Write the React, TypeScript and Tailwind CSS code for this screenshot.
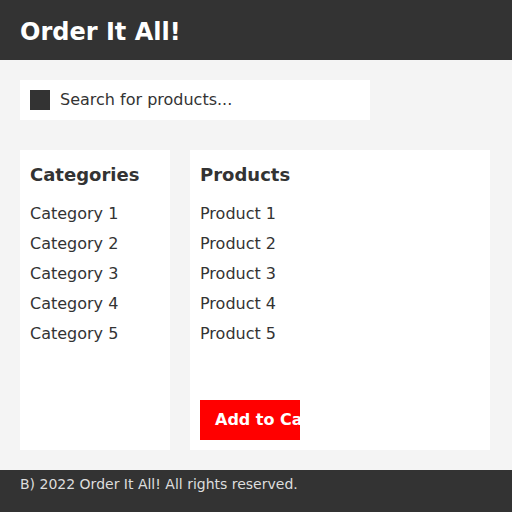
export default function App() {
  const categories = ['Category 1', 'Category 2', 'Category 3', 'Category 4', 'Category 5']
  const products = ['Product 1', 'Product 2', 'Product 3', 'Product 4', 'Product 5']

  return (
    <div className="flex h-[512px] w-[512px] flex-col overflow-hidden bg-[#f4f4f4] font-['DejaVu_Sans',sans-serif] text-[#333]">
      {/* Header */}
      <header className="flex h-[60px] shrink-0 items-center bg-[#333] px-[20px] pt-[4px]">
        <h1 className="text-[24px] font-bold text-white">Order It All!</h1>
      </header>

      <main className="flex flex-1 flex-col gap-[30px] p-[20px]">
        {/* Search */}
        <div className="flex h-[40px] w-[350px] items-center gap-[10px] bg-white px-[10px]">
          <span className="h-[20px] w-[20px] bg-[#333]" />
          <span className="text-[16px]">Search for products...</span>
        </div>

        <div className="flex flex-1 gap-[20px]">
          {/* Categories */}
          <section className="flex w-[150px] flex-col bg-white p-[10px]">
            <h2 className="mb-[10px] text-[18px] font-bold leading-[29px]">Categories</h2>
            <ul>
              {categories.map((c) => (
                <li key={c} className="text-[16px] leading-[30px]">{c}</li>
              ))}
            </ul>
          </section>

          {/* Products */}
          <section className="flex w-[300px] flex-col bg-white p-[10px]">
            <h2 className="mb-[10px] text-[18px] font-bold leading-[29px]">Products</h2>
            <ul>
              {products.map((p) => (
                <li key={p} className="text-[16px] leading-[30px]">{p}</li>
              ))}
            </ul>
            <button className="mt-auto h-[40px] w-[100px] overflow-hidden whitespace-nowrap bg-[#ff0000] px-[15px] text-left text-[16px] font-bold text-white">
              Add to Cart
            </button>
          </section>
        </div>
      </main>

      {/* Footer */}
      <footer className="h-[42px] shrink-0 bg-[#333] px-[20px] pt-[4px] text-[14px] leading-[20px] text-[#ddd]">
        B) 2022 Order It All! All rights reserved.
      </footer>
    </div>
  )
}
